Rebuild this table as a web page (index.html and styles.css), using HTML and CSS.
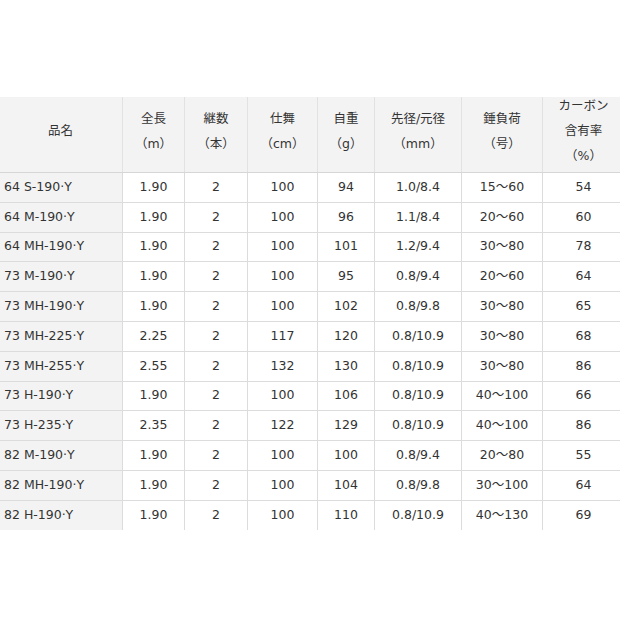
FILE: index.html
```html
<!DOCTYPE html>
<html lang="ja">
<head>
<meta charset="utf-8">
<link rel="stylesheet" href="styles.css">
</head>
<body>
<table class="spec">
  <colgroup>
    <col class="c1"><col class="c2"><col class="c3"><col class="c4"><col class="c5"><col class="c6"><col class="c7"><col class="c8">
  </colgroup>
  <thead>
    <tr>
      <th>品名</th>
      <th>全長<br>（m）</th>
      <th>継数<br>（本）</th>
      <th>仕舞<br>（cm）</th>
      <th>自重<br>（g）</th>
      <th>先径/元径<br>（mm）</th>
      <th>錘負荷<br>（号）</th>
      <th><div class="tall">カーボン<br>含有率<br>（%）</div></th>
    </tr>
  </thead>
  <tbody>
    <tr><td class="name">64 S-190·Y</td><td>1.90</td><td>2</td><td>100</td><td>94</td><td>1.0/8.4</td><td>15～60</td><td>54</td></tr>
    <tr><td class="name">64 M-190·Y</td><td>1.90</td><td>2</td><td>100</td><td>96</td><td>1.1/8.4</td><td>20～60</td><td>60</td></tr>
    <tr><td class="name">64 MH-190·Y</td><td>1.90</td><td>2</td><td>100</td><td>101</td><td>1.2/9.4</td><td>30～80</td><td>78</td></tr>
    <tr><td class="name">73 M-190·Y</td><td>1.90</td><td>2</td><td>100</td><td>95</td><td>0.8/9.4</td><td>20～60</td><td>64</td></tr>
    <tr><td class="name">73 MH-190·Y</td><td>1.90</td><td>2</td><td>100</td><td>102</td><td>0.8/9.8</td><td>30～80</td><td>65</td></tr>
    <tr><td class="name">73 MH-225·Y</td><td>2.25</td><td>2</td><td>117</td><td>120</td><td>0.8/10.9</td><td>30～80</td><td>68</td></tr>
    <tr><td class="name">73 MH-255·Y</td><td>2.55</td><td>2</td><td>132</td><td>130</td><td>0.8/10.9</td><td>30～80</td><td>86</td></tr>
    <tr><td class="name">73 H-190·Y</td><td>1.90</td><td>2</td><td>100</td><td>106</td><td>0.8/10.9</td><td>40～100</td><td>66</td></tr>
    <tr><td class="name">73 H-235·Y</td><td>2.35</td><td>2</td><td>122</td><td>129</td><td>0.8/10.9</td><td>40～100</td><td>86</td></tr>
    <tr><td class="name">82 M-190·Y</td><td>1.90</td><td>2</td><td>100</td><td>100</td><td>0.8/9.4</td><td>20～80</td><td>55</td></tr>
    <tr><td class="name">82 MH-190·Y</td><td>1.90</td><td>2</td><td>100</td><td>104</td><td>0.8/9.8</td><td>30～100</td><td>64</td></tr>
    <tr><td class="name">82 H-190·Y</td><td>1.90</td><td>2</td><td>100</td><td>110</td><td>0.8/10.9</td><td>40～130</td><td>69</td></tr>
  </tbody>
</table>
</body>
</html>
```
FILE: styles.css
```css
html, body {
  margin: 0;
  padding: 0;
  background: #fff;
  overflow: hidden;
}
body {
  font-family: "DejaVu Sans", "Noto Sans CJK JP", sans-serif;
  font-size: 12.5px;
  color: #333;
}
.spec {
  border-collapse: collapse;
  table-layout: fixed;
  width: 626px;
  margin: 97px 0 0 -2px;
}
.c1 { width: 124px; }
.c2 { width: 62px; }
.c3 { width: 63px; }
.c4 { width: 70px; }
.c5 { width: 57px; }
.c6 { width: 87px; }
.c7 { width: 81px; }
.c8 { width: 82px; }
.spec th {
  height: 67px;
  padding: 0 0 8px;
  background: #f3f3f3;
  font-weight: normal;
  font-size: 12.5px;
  line-height: 25px;
  text-align: center;
  vertical-align: middle;
  border-left: 1px solid #e2e2e2;
  border-right: 1px solid #e2e2e2;
  border-bottom: 1px solid #d6d6d6;
}
.spec th .tall {
  margin: -6px 0 -6px;
}
.spec td {
  height: 29.8px;
  box-sizing: border-box;
  padding: 0 0 1px;
  text-align: center;
  vertical-align: middle;
  border: 1px solid #dcdcdc;
  border-top: 0;
  line-height: 16px;
}
.spec tbody tr:last-child td {
  border-bottom: 0;
}
.spec td.name {
  text-align: left;
  padding-left: 5px;
  background: #f3f3f3;
}
```
